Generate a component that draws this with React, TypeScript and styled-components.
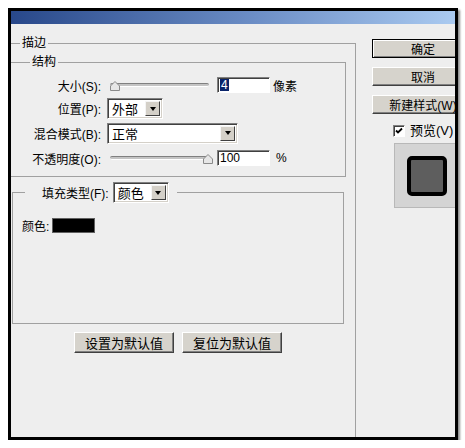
import React from 'react';
import styled, { createGlobalStyle } from 'styled-components';

const GlobalStyle = createGlobalStyle`
  body {
    margin: 0;
    background: #ffffff;
    font-family: "Liberation Sans", "Noto Sans CJK SC", sans-serif;
    font-size: 12px;
    color: #000;
  }
`;

const Frame = styled.div`
  box-sizing: border-box;
  width: 450px;
  height: 432px;
  margin: 8px 0 0 8px;
  border: 3px solid #000;
  box-shadow: 2px 2px 2px rgb(0 0 0 / 0.45);
  display: flex;
  flex-direction: column;
  overflow: hidden;
`;

const TitleBar = styled.div`
  flex: none;
  height: 13px;
  background: linear-gradient(to right, #28488a, #6c8ec6 55%, #aacaf0);
`;

const Body = styled.div`
  flex: 1;
  display: flex;
  background: #eeeeee;
  overflow: hidden;
`;

const LeftCol = styled.div`
  flex: none;
  width: 345px;
  display: flex;
  flex-direction: column;
`;

const OuterGroup = styled.div`
  position: relative;
  box-sizing: border-box;
  flex: 1;
  margin-top: 19px;
  border-top: 1px solid #a0a0a0;
  border-right: 1px solid #a0a0a0;
`;

const Legend = styled.span<{ $left: number }>`
  position: absolute;
  top: -8px;
  left: ${(p) => p.$left}px;
  padding: 0 2px;
  line-height: 14px;
  background: #eeeeee;
`;

const StructGroup = styled.div`
  position: relative;
  box-sizing: border-box;
  width: 335px;
  height: 115px;
  margin-top: 18px;
  border: 1px solid #a0a0a0;
  border-left: none;
`;

const Rows = styled.div`
  display: grid;
  grid-template-columns: 93px auto;
  grid-template-rows: 24px 23px 26px 24px;
  align-items: center;
  padding-top: 10px;
`;

const Label = styled.span`
  text-align: right;
  padding-right: 3px;
  white-space: nowrap;
`;

const Controls = styled.div`
  display: flex;
  align-items: center;
  padding-left: 3px;
`;

const Slider = styled.div`
  position: relative;
  box-sizing: border-box;
  width: 104px;
  height: 16px;
  padding: 0 2px 0 3px;
  display: flex;
  align-items: center;
`;

const Track = styled.div`
  flex: 1;
  height: 4px;
  box-sizing: border-box;
  border-radius: 2px;
  background: #c4c4c4;
  border-top: 1px solid #808080;
  border-bottom: 1px solid #ffffff;
`;

const Thumb = styled.svg<{ $left: number }>`
  position: absolute;
  top: 4px;
  left: ${(p) => p.$left}px;
`;

const TextBox = styled.div`
  box-sizing: border-box;
  width: 53px;
  height: 16px;
  margin-left: 6px;
  padding-left: 2px;
  display: flex;
  align-items: center;
  background: #fff;
  border: 1px solid;
  border-color: #808080 #ffffff #ffffff #808080;
  box-shadow: inset 1px 1px 0 #404040;
  line-height: 12px;
`;

const Selected = styled.span`
  background: #0a246a;
  color: #fff;
  padding: 0 1px;
`;

const Unit = styled.span<{ $gap: number }>`
  margin-left: ${(p) => p.$gap}px;
`;

const Select = styled.div<{ $width: number }>`
  box-sizing: border-box;
  width: ${(p) => p.$width}px;
  height: 21px;
  display: flex;
  align-items: center;
  background: #fff;
  border: 1px solid;
  border-color: #808080 #ffffff #ffffff #808080;
  box-shadow: inset 1px 1px 0 #404040, inset -1px -1px 0 #d4d0c8;
  padding: 2px;
`;

const SelectText = styled.span`
  flex: 1;
  padding-left: 2px;
  font-size: 13px;
`;

const DropButton = styled.div`
  box-sizing: border-box;
  width: 15px;
  height: 15px;
  background: #d4d0c8;
  border: 1px solid;
  border-color: #f4f4f4 #404040 #404040 #f4f4f4;
  display: flex;
  align-items: center;
  justify-content: center;

  &::after {
    content: '';
    border-left: 3.5px solid transparent;
    border-right: 3.5px solid transparent;
    border-top: 4px solid #000;
  }
`;

const FillGroup = styled.div`
  position: relative;
  box-sizing: border-box;
  width: 332px;
  height: 132px;
  margin: 15px 0 0 1px;
  border: 1px solid #a0a0a0;
`;

const FillLegend = styled.div`
  position: absolute;
  top: -11px;
  left: 12px;
  display: flex;
  align-items: center;
  gap: 4px;
  padding: 0 8px 0 17px;
  background: #eeeeee;
`;

const ColorRow = styled.div`
  display: flex;
  align-items: center;
  padding: 24px 0 0 9px;
`;

const Swatch = styled.div`
  width: 43px;
  height: 15px;
  margin-left: 3px;
  box-sizing: border-box;
  background: #000;
  border: 1px solid #606060;
`;

const BottomRow = styled.div`
  display: flex;
  gap: 8px;
  margin-top: 8px;
  padding-left: 63px;
`;

const Button = styled.div<{ $width: number; $default?: boolean }>`
  box-sizing: border-box;
  flex: none;
  width: ${(p) => p.$width}px;
  height: 19px;
  display: flex;
  align-items: center;
  justify-content: center;
  background: #d6d3cc;
  border: 1px solid;
  border-color: ${(p) =>
    p.$default ? '#000' : '#ffffff #404040 #404040 #ffffff'};
  box-shadow: ${(p) =>
    p.$default
      ? 'inset 1px 1px 0 #fff, inset -1px -1px 0 #808080'
      : 'inset -1px -1px 0 #808080'};
  font-size: 12px;
  white-space: nowrap;
`;

const BottomButton = styled(Button)`
  height: 21px;
  font-size: 13px;
`;

const RightCol = styled.div`
  flex: none;
  width: 99px;
  padding: 15px 0 0 16px;
  box-sizing: border-box;
  display: flex;
  flex-direction: column;
  gap: 9px;
`;

const CheckRow = styled.div`
  display: flex;
  align-items: center;
  height: 13px;
  margin-top: 1px;
  padding-left: 21px;
  white-space: nowrap;
  font-size: 13px;
  line-height: 13px;
`;

const CheckBox = styled.div`
  box-sizing: border-box;
  width: 12px;
  height: 12px;
  margin-right: 5px;
  background: #fff;
  border: 1px solid;
  border-color: #808080 #ffffff #ffffff #808080;
  box-shadow: inset 1px 1px 0 #404040;
  display: flex;
  align-items: center;
  justify-content: center;
`;

const PreviewBox = styled.div`
  box-sizing: border-box;
  flex: none;
  width: 66px;
  height: 65px;
  margin: -3px 0 0 22px;
  background: #d4d4d4;
  border: 1px solid #b8b8b8;
  display: flex;
  align-items: center;
  justify-content: center;
`;

const PreviewShape = styled.div`
  box-sizing: border-box;
  width: 40px;
  height: 40px;
  border: 4px solid #000;
  border-radius: 5px;
  background: #5e5e5e;
`;

const SliderThumb = ({ left }: { left: number }) => (
  <Thumb $left={left} width="10" height="10" viewBox="0 0 10 10">
    <polygon
      points="0.5,9.5 0.5,5 5,0.5 9.5,5 9.5,9.5"
      fill="#e6e6e6"
      stroke="#8a8a8a"
    />
  </Thumb>
);

const Dropdown = ({ width, text }: { width: number; text: string }) => (
  <Select $width={width}>
    <SelectText>{text}</SelectText>
    <DropButton />
  </Select>
);

export default function App() {
  return (
    <>
      <GlobalStyle />
      <Frame>
        <TitleBar />
        <Body>
          <LeftCol>
            <OuterGroup>
              <Legend $left={9}>描边</Legend>
              <StructGroup>
                <Legend $left={19}>结构</Legend>
                <Rows>
                  <Label>大小(S):</Label>
                  <Controls>
                    <Slider>
                      <Track />
                      <SliderThumb left={3} />
                    </Slider>
                    <TextBox>
                      <Selected>4</Selected>
                    </TextBox>
                    <Unit $gap={3}>像素</Unit>
                  </Controls>
                  <Label>位置(P):</Label>
                  <Controls>
                    <Dropdown width={56} text="外部" />
                  </Controls>
                  <Label>混合模式(B):</Label>
                  <Controls>
                    <Dropdown width={131} text="正常" />
                  </Controls>
                  <Label>不透明度(O):</Label>
                  <Controls>
                    <Slider>
                      <Track />
                      <SliderThumb left={96} />
                    </Slider>
                    <TextBox>100</TextBox>
                    <Unit $gap={6}>%</Unit>
                  </Controls>
                </Rows>
              </StructGroup>
              <FillGroup>
                <FillLegend>
                  <span>填充类型(F):</span>
                  <Dropdown width={56} text="颜色" />
                </FillLegend>
                <ColorRow>
                  <span>颜色:</span>
                  <Swatch />
                </ColorRow>
              </FillGroup>
              <BottomRow>
                <BottomButton $width={100}>设置为默认值</BottomButton>
                <BottomButton $width={100}>复位为默认值</BottomButton>
              </BottomRow>
            </OuterGroup>
          </LeftCol>
          <RightCol>
            <Button $width={102} $default>
              确定
            </Button>
            <Button $width={102}>取消</Button>
            <Button $width={102}>新建样式(W)</Button>
            <CheckRow>
              <CheckBox>
                <svg width="8" height="8" viewBox="0 0 8 8">
                  <path d="M1 3.5 L3 5.5 L7 1.5" stroke="#000" strokeWidth="1.8" fill="none" />
                </svg>
              </CheckBox>
              预览(V)
            </CheckRow>
            <PreviewBox>
              <PreviewShape />
            </PreviewBox>
          </RightCol>
        </Body>
      </Frame>
    </>
  );
}
